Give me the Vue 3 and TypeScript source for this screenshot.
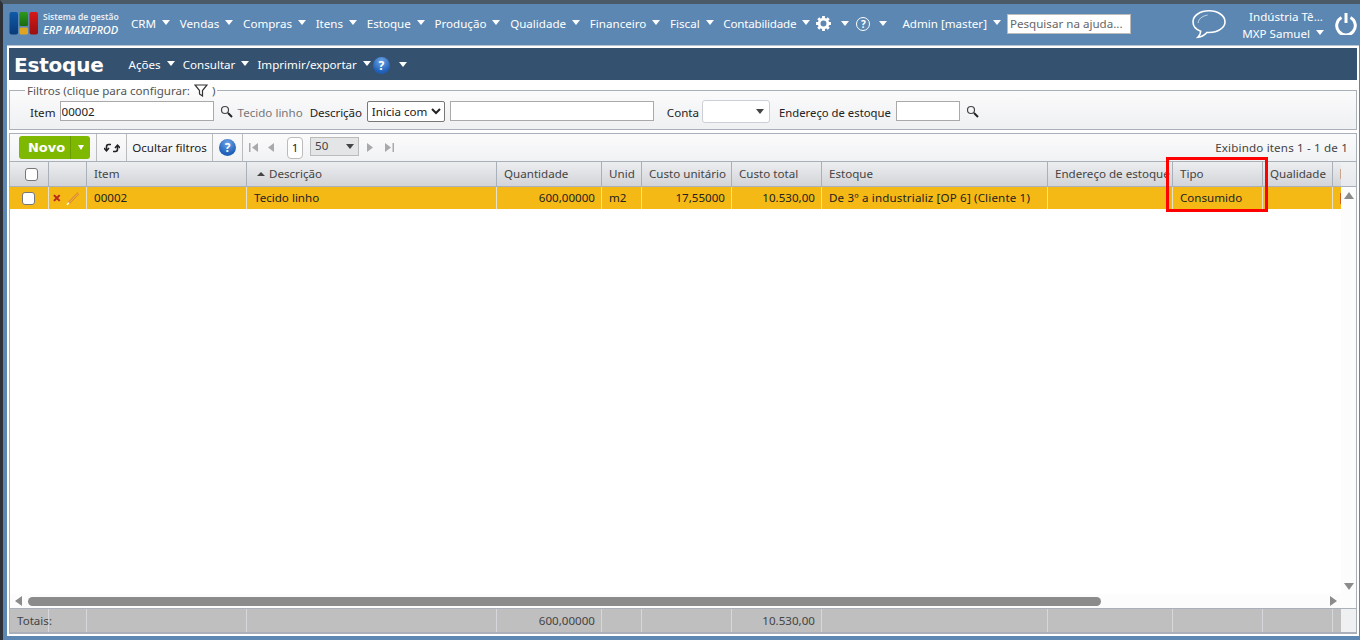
<script setup lang="ts">
interface Col { label: string; w: number; cls?: string; value?: string; total?: string }
const menus: string[] = ['CRM', 'Vendas', 'Compras', 'Itens', 'Estoque', 'Produção', 'Qualidade', 'Financeiro', 'Fiscal', 'Contabilidade']
const cols: Col[] = [
  { label: '', w: 39, cls: 'chk' },
  { label: '', w: 38, cls: 'act' },
  { label: 'Item', w: 160, value: '00002' },
  { label: 'Descrição', w: 250, cls: 'sorted', value: 'Tecido linho' },
  { label: 'Quantidade', w: 105, cls: 'num', value: '600,00000', total: '600,00000' },
  { label: 'Unid', w: 40, value: 'm2' },
  { label: 'Custo unitário', w: 90, cls: 'num', value: '17,55000' },
  { label: 'Custo total', w: 90, cls: 'num', value: '10.530,00', total: '10.530,00' },
  { label: 'Estoque', w: 226, cls: 'spaced', value: 'De 3º a industrializ [OP 6] (Cliente 1)' },
  { label: 'Endereço de estoque', w: 125 },
  { label: 'Tipo', w: 90, value: 'Consumido' },
  { label: 'Qualidade', w: 70 },
  { label: '', w: 8, cls: 'cut' }
]
</script>

<template>
  <div class="page">
    <header class="topbar">
      <div class="logo">
        <svg width="30" height="24" viewBox="0 0 30 24">
          <defs>
            <linearGradient id="lb" x1="0" x2="0" y1="0" y2="1"><stop offset="0" stop-color="#0f5aa8" /><stop offset="1" stop-color="#0a3a78" /></linearGradient>
            <linearGradient id="lg" x1="0" x2="0" y1="0" y2="1"><stop offset="0" stop-color="#2d9a1c" /><stop offset="1" stop-color="#1a6a10" /></linearGradient>
            <linearGradient id="lr" x1="0" x2="0" y1="0" y2="1"><stop offset="0" stop-color="#d81818" /><stop offset="1" stop-color="#9a1010" /></linearGradient>
          </defs>
          <rect x="0.5" y="0" width="8.5" height="22.5" rx="2" fill="url(#lb)" />
          <rect x="10.5" y="0" width="8.5" height="14" rx="1.5" fill="url(#lg)" />
          <rect x="10.5" y="15.5" width="8.5" height="7" rx="1.5" fill="#e0a520" />
          <rect x="20.5" y="0" width="8.5" height="22.5" rx="2" fill="url(#lr)" />
        </svg>
        <div class="logo-text">
          <span class="l1">Sistema de gestão</span>
          <span class="l2">ERP MAXIPROD</span>
        </div>
      </div>
      <nav class="menus">
        <span v-for="m in menus" :key="m" class="menu">{{ m }}<i class="caret" /></span>
        <span class="menu icon-menu">
          <svg width="17" height="17" viewBox="0 0 24 24" fill="none" stroke="#fff">
            <circle cx="12" cy="12" r="6.2" stroke-width="4" />
            <path d="M12 1.5v4M12 18.5v4M1.5 12h4M18.5 12h4M4.6 4.6l2.8 2.8M16.6 16.6l2.8 2.8M4.6 19.4l2.8-2.8M16.6 7.4l2.8-2.8" stroke-width="4" />
          </svg>
          <i class="caret wide" />
        </span>
        <span class="menu icon-menu help-menu">
          <span class="q">?</span>
          <i class="caret wide" />
        </span>
        <span class="menu admin">Admin [master]<i class="caret" /></span>
        <span class="help-search">Pesquisar na ajuda...</span>
      </nav>
      <svg class="chat" width="36" height="32" viewBox="0 0 38 34" fill="none">
        <path d="M19 3C9.5 3 2 8.2 2 14.5c0 4.600 3.400 8.400 8.200 10.200-.3 2.600-1.400 5-2.800 6.300 3.600-.4 7-2.400 9.400-5 .7.1 1.500.1 2.200.1 9.500 0 17-5 17-11.600C36 8.200 28.500 3 19 3Z" stroke="#fff" stroke-width="1.700" />
        <path d="M7.500 16c0-4 4-7.500 10-8.500" stroke="#fff" stroke-width="1" opacity=".7" />
      </svg>
      <div class="user">
        <span>Indústria Tê...</span>
        <span class="user2">MXP Samuel<i class="caret" /></span>
      </div>
      <svg class="power" width="22" height="22" viewBox="0 0 22 22" fill="none" stroke="#fff" stroke-width="3">
        <path d="M6.500 4.500a9.300 9.300 0 1 0 9 0" />
        <path d="M11 0v10" />
      </svg>
    </header>

    <main class="frame">
      <div class="titlebar">
        <h1>Estoque</h1>
        <span class="tmenu">Ações<i class="caret" /></span>
        <span class="tmenu">Consultar<i class="caret" /></span>
        <span class="tmenu last">Imprimir/exportar<i class="caret" /></span>
        <span class="q blue">?</span>
        <i class="caret solo" />
      </div>

      <fieldset class="filters">
        <legend>Filtros (clique para configurar:
          <svg width="14" height="13" viewBox="0 0 14 13" fill="none" stroke="#333" stroke-width="1.200"><path d="M1 1h12L8.500 6.500V12L5.500 10V6.500Z" /></svg>
          )</legend>
        <div class="frow">
          <label class="lb f-item">Item</label>
          <input class="inp item" value="00002" />
          <svg class="lens" width="13" height="13" viewBox="0 0 13 13" fill="none"><circle cx="5" cy="5" r="3.500" stroke="#444" stroke-width="1.200" /><path d="M8 8l4 4" stroke="#222" stroke-width="2" /></svg>
          <span class="lb muted">Tecido linho</span>
          <label class="lb f-desc">Descrição</label>
          <select class="sel"><option>Inicia com</option></select>
          <input class="inp desc" />
          <label class="lb f-conta">Conta</label>
          <span class="combo"><i class="caret dark" /></span>
          <label class="lb f-end">Endereço de estoque</label>
          <input class="inp end" />
          <svg class="lens" width="13" height="13" viewBox="0 0 13 13" fill="none"><circle cx="5" cy="5" r="3.500" stroke="#444" stroke-width="1.200" /><path d="M8 8l4 4" stroke="#222" stroke-width="2" /></svg>
        </div>
      </fieldset>

      <section class="grid">
        <div class="toolbar">
          <div class="novo"><span class="novo-l">Novo</span><span class="novo-r"><i class="caret tiny" /></span></div>
          <span class="tool refresh">
            <svg width="16" height="14" viewBox="0 0 16 14" fill="none" stroke="#222" stroke-width="1.600">
              <path d="M7 3.500H4.500C3 3.500 2.500 5 2.500 6v3" /><path d="M0 7l2.500 2.800L5 7" />
              <path d="M9 10.500h2.500c1.500 0 2-1.500 2-2.500V4.500" /><path d="M11 7l2.500-2.800L16 7" />
            </svg>
          </span>
          <span class="tool hide">Ocultar filtros</span>
          <span class="tool help"><span class="q blue">?</span></span>
          <div class="pager">
            <svg width="9" height="9" viewBox="0 0 9 9" fill="#a9a9a9"><path d="M0 0h1.500v9H0zM9 0v9L3 4.500z" /></svg>
            <svg class="pg-prev" width="6" height="9" viewBox="0 0 6 9" fill="#a9a9a9"><path d="M6 0v9L0 4.500z" /></svg>
            <span class="pg-num">1</span>
            <span class="pg-size">50<i class="caret dark" /></span>
            <svg class="pg-next" width="6" height="9" viewBox="0 0 6 9" fill="#a9a9a9"><path d="M0 0v9l6-4.500z" /></svg>
            <svg class="pg-last" width="9" height="9" viewBox="0 0 9 9" fill="#a9a9a9"><path d="M0 0v9l6-4.500zM7.500 0H9v9H7.500z" /></svg>
          </div>
          <span class="showing">Exibindo itens 1 - 1 de 1</span>
        </div>

        <div class="thead">
          <div v-for="(c, i) in cols" :key="i" class="th" :class="c.cls" :style="{ width: c.w + 'px' }">
            <span v-if="c.cls === 'chk'" class="box" />
            <template v-else-if="c.cls === 'sorted'"><i class="sort" />{{ c.label }}</template>
            <span v-else-if="c.cls === 'cut'" class="sliver" />
            <template v-else>{{ c.label }}</template>
          </div>
          <div class="corner" />
        </div>

        <div class="body">
          <div class="vbody">
            <div class="row">
              <div v-for="(c, i) in cols" :key="i" class="td" :class="c.cls" :style="{ width: c.w + 'px' }">
                <span v-if="c.cls === 'chk'" class="box" />
                <template v-else-if="c.cls === 'act'">
                  <svg width="8" height="8" viewBox="0 0 8 8" stroke="#b8281e" stroke-width="2.200"><path d="M1 1l6 6M7 1L1 7" /></svg>
                  <svg class="pencil" width="15" height="15" viewBox="0 0 15 15" fill="none"><path d="M3 12L13 2" stroke="#d9822b" stroke-width="2.600" /><path d="M3 12L13 2" stroke="#f6c35a" stroke-width="1" /><path d="M1 14l2-2" stroke="#fff" stroke-width="1.600" /></svg>
                </template>
                <span v-else-if="c.cls === 'cut'" class="sliver hot" />
                <template v-else>{{ c.value }}</template>
              </div>
            </div>
            <div class="vscroll">
              <span class="arrow-u" />
              <span class="arrow-d" />
            </div>
          </div>
          <div class="hscroll">
            <span class="arrow-l" />
            <span class="thumb" />
            <span class="arrow-r" />
          </div>
        </div>

        <div class="tfoot">
          <div v-for="(c, i) in cols" :key="i" class="tf" :class="c.cls === 'num' ? 'num' : ''" :style="{ width: c.w + 'px' }">{{ i === 0 ? 'Totais:' : c.total }}</div>
          <div class="corner light" />
        </div>

        <div class="highlight" />
      </section>
    </main>
  </div>
</template>

<style>
html, body { margin: 0; padding: 0; background: #333; }
</style>

<style scoped>
.page {
  width: 1360px; height: 640px; box-sizing: border-box; overflow: hidden;
  display: flex; flex-direction: column;
  background: #5c87b2; border-top: 4px solid #4a5a66; border-left: 3px solid #2e3238;
  font: 12px/14px "Noto Sans", sans-serif; color: #222;
}
.caret { display: inline-block; width: 0; height: 0; margin-left: 6px; border: 4px solid transparent; border-top: 5px solid #fff; border-bottom: 0; vertical-align: 3px; }
.caret.dark { border-top-color: #444; }
.caret.wide { margin-left: 9px; }

.topbar { height: 41px; flex: none; display: flex; align-items: center; padding-left: 6px; color: #fff; }
.logo { display: flex; align-items: center; width: 122px; flex: none; margin-bottom: 2px; }
.logo-text { display: flex; flex-direction: column; margin-left: 4px; }
.l1 { font-size: 8.500px; line-height: 12px; font-weight: 600; color: #e8eef6; white-space: nowrap; }
.l2 { font-size: 11px; line-height: 13px; font-style: italic; color: #fff; font-weight: 500; white-space: nowrap; }
.menus { display: flex; align-items: center; white-space: nowrap; margin-bottom: 2px; }
.menu { font-size: 11.600px; margin-right: 9.700px; }
.menu:nth-child(10) { margin-right: 5px; letter-spacing: -.2px; }
.icon-menu { display: flex; align-items: center; margin-right: 7px; }
.help-menu { margin-right: 15px; }
.icon-menu .caret { vertical-align: 0; }
.admin { margin-right: 6px; }
.q { display: inline-flex; align-items: center; justify-content: center; width: 14px; height: 14px; box-sizing: border-box; border: 1.500px solid #fff; border-radius: 50%; font-size: 10px; font-weight: 700; line-height: 1; }
.q.blue { width: 17px; height: 17px; border: 0; color: #fff; font-size: 12px; background: radial-gradient(circle at 50% 25%, #6fa5e6, #1f5fb8 70%); }
.help-search { width: 124px; height: 20px; box-sizing: border-box; border: 1px solid #bbb; background: #fff; color: #666; font-size: 11.600px; line-height: 18px; padding-left: 2px; }
.chat { margin-left: 60px; flex: none; margin-bottom: 1px; }
.user { width: 96px; margin-left: 0; display: flex; flex-direction: column; align-items: flex-end; font-size: 11.600px; line-height: 17px; flex: none; text-align: right; }
.user2 { margin-right: -1px; }
.power { margin-left: 12px; flex: none; margin-bottom: 1px; }

.frame { flex: 1; min-height: 0; margin: 1px 0 4px 4px; width: 1352px; box-sizing: border-box; background: #fff; border: 2px solid #fff; display: flex; flex-direction: column; box-shadow: 0 -1px 0 #b8c4d0; }
.titlebar { height: 32px; flex: none; background: #34526f; color: #fff; display: flex; align-items: center; padding-left: 5px; }
.titlebar h1 { margin: 2px 25px 0 0; font: 700 20px/28px "DejaVu Sans", sans-serif; letter-spacing: -.2px; }
.tmenu { font-size: 11.600px; margin-right: 8px; padding-top: 2px; }
.tmenu.last { margin-right: 2px; }
.titlebar .q.blue { margin-top: 3px; }
.caret.solo { margin-left: 9px; vertical-align: 0; }

.filters { flex: none; height: 46px; margin: 4px 0 0; padding: 0; box-sizing: border-box; border: 1px solid #aab0ba; background: linear-gradient(#fbfbfc, #eff0f2); min-width: 0; }
.filters legend { margin-left: 15px; padding: 0 2px; font-size: 11.600px; line-height: 13px; color: #555; display: flex; align-items: center; gap: 4px; }
.frow { display: flex; align-items: center; height: 24px; margin-top: 2px; }
.lb { font-size: 11.600px; padding-top: 3px; }
.f-item { margin-left: 20px; }
.inp { box-sizing: border-box; height: 20px; border: 1px solid #a9a9a9; background: #fff; padding: 0 1px; font: 11.600px "Noto Sans", sans-serif; color: #222; outline: none; }
.inp.item { width: 154px; margin-left: 4px; }
.lens { margin-left: 6px; flex: none; }
.muted { margin-left: 5px; color: #777; }
.f-desc { margin-left: 7px; letter-spacing: -.1px; }
.sel { margin-left: 5px; width: 78px; height: 21px; box-sizing: border-box; font: 11.600px "Noto Sans", sans-serif; border: 1px solid #777; border-radius: 2px; background: #fff; color: #222; padding: 0; }
.inp.desc { width: 204px; margin-left: 5px; }
.f-conta { margin-left: 13px; }
.combo { width: 68px; height: 23px; box-sizing: border-box; margin-left: 3px; border: 1px solid #ccd0d6; border-radius: 3px; background: #fff; display: flex; align-items: center; justify-content: flex-end; padding-right: 5px; }
.f-end { margin-left: 9px; font-size: 11.300px; }
.inp.end { width: 64px; margin-left: 5px; }

.grid { flex: 1; min-height: 0; margin-top: 3px; position: relative; border: 1px solid #aab0ba; border-bottom-width: 2px; display: flex; flex-direction: column; background: #fff; }
.toolbar { height: 27px; flex: none; display: flex; align-items: center; background: linear-gradient(#fbfbfc, #f1f2f4); padding-left: 9px; }
.novo { display: flex; width: 71px; height: 23px; border-radius: 3px; background: #7fb800; color: #fff; font: 700 13px/23px "DejaVu Sans", sans-serif; }
.novo-l { flex: 1; text-align: center; padding-left: 4px; }
.novo-r { width: 19px; border-left: 1px solid #6a9c00; display: flex; align-items: center; justify-content: center; }
.caret.tiny { margin: 0; border-width: 3px; border-top-width: 5px; border-bottom: 0; vertical-align: 0; }
.tool { height: 27px; display: flex; align-items: center; justify-content: center; box-sizing: border-box; border-left: 1px solid #bbb; flex: none; }
.refresh { width: 30px; margin-left: 6px; }
.hide { width: 86px; font-size: 11.600px; }
.help { width: 30px; }
.pager { height: 27px; display: flex; align-items: center; border-left: 1px solid #bbb; padding-left: 6px; }
.pg-prev { margin-left: 10px; }
.pg-num { width: 16px; height: 22px; box-sizing: border-box; margin-left: 13px; border: 1px solid #bbb; border-radius: 4px; background: #fff; text-align: center; font-size: 11.600px; line-height: 20px; }
.pg-size { width: 49px; height: 19px; box-sizing: border-box; margin: -3px 0 0 7px; border: 1px solid #bbb; background: #e4e5e7; display: flex; justify-content: space-between; align-items: center; padding: 0 4px; font-size: 11.600px; color: #444; }
.pg-size .caret { margin: 0; vertical-align: 0; }
.pg-next { margin-left: 8px; }
.pg-last { margin-left: 12px; }
.showing { margin-left: auto; padding-right: 8px; color: #444; font-size: 11.600px; letter-spacing: .16px; }

.thead { height: 26px; flex: none; display: flex; box-sizing: border-box; border-top: 1px solid #aab0ba; border-bottom: 1px solid #aab0ba; background: linear-gradient(#eceef0, #d2d4d8); }
.th { flex: none; box-sizing: border-box; height: 24px; border-right: 1px solid #aab0ba; padding-left: 7px; line-height: 24px; color: #444; font-size: 11.600px; white-space: nowrap; overflow: hidden; }
.th.chk { padding-left: 15px; display: flex; align-items: center; }
.th.sorted { padding-left: 10px; }
.th.cut, .td.cut { border-right: 0; padding: 0; position: relative; }
.sliver { position: absolute; right: 0; top: 7px; width: 1px; height: 10px; background: #c9a58c; }
.sliver.hot { top: 6px; height: 11px; background: #d0601a; }
.sort { display: inline-block; width: 0; height: 0; margin-right: 4px; border: 4px solid transparent; border-bottom: 4px solid #444; border-top: 0; vertical-align: 2px; }
.box { display: block; width: 13px; height: 13px; box-sizing: border-box; background: #fff; border: 1px solid #777; border-radius: 3px; }
.corner { flex: 1; background: linear-gradient(#f0f1f3, #e8e9ec); }

.body { flex: 1; min-height: 0; display: flex; flex-direction: column; }
.vbody { flex: 1; min-height: 0; display: flex; align-items: stretch; }
.row { display: flex; height: 22px; flex: 1; min-width: 0; background: #f5b915; }
.td { flex: none; box-sizing: border-box; height: 22px; border-right: 1px solid #e8e2c8; padding: 0 6px 0 7px; line-height: 22px; font-size: 11.600px; color: #222; white-space: nowrap; overflow: hidden; }
.td.num { text-align: right; }
.td.spaced { letter-spacing: .15px; }
.td.chk { padding-left: 12px; display: flex; align-items: center; }
.td.act { padding-left: 4px; display: flex; align-items: center; gap: 5px; }
.hscroll { height: 14px; flex: none; display: flex; align-items: center; padding-left: 5px; box-sizing: border-box; background: #fcfcfc; }
.thumb { width: 1073px; height: 9px; margin-left: 6px; border-radius: 5px; background: #8b8b8b; }
.arrow-l { width: 0; height: 0; border: 5px solid transparent; border-right: 7px solid #8b8b8b; border-left: 0; }
.arrow-r { width: 0; height: 0; margin-left: 229px; border: 5px solid transparent; border-left: 7px solid #8b8b8b; border-right: 0; }
.vscroll { width: 15px; flex: none; background: #fcfcfc; display: flex; flex-direction: column; justify-content: space-between; align-items: center; padding: 5px 0 4px; box-sizing: border-box; }
.arrow-u { width: 0; height: 0; border: 5px solid transparent; border-bottom: 7px solid #8b8b8b; border-top: 0; }
.arrow-d { width: 0; height: 0; border: 5px solid transparent; border-top: 7px solid #8b8b8b; border-bottom: 0; }

.tfoot { height: 24px; flex: none; display: flex; box-sizing: border-box; border-top: 1px solid #aab0ba; background: #bfbfbf; }
.tf { flex: none; box-sizing: border-box; height: 23px; border-right: 1px solid #d8d8dc; padding: 0 6px 0 7px; line-height: 23px; font-size: 11.600px; color: #444; white-space: nowrap; }
.tf.num { text-align: right; }
.tf:nth-child(13) { border-right: 0; padding: 0; }
.corner.light { background: #eff0f2; }

.highlight { position: absolute; left: 1156px; top: 23px; width: 102px; height: 55px; box-sizing: border-box; border: 3px solid #f00; pointer-events: none; }
</style>
